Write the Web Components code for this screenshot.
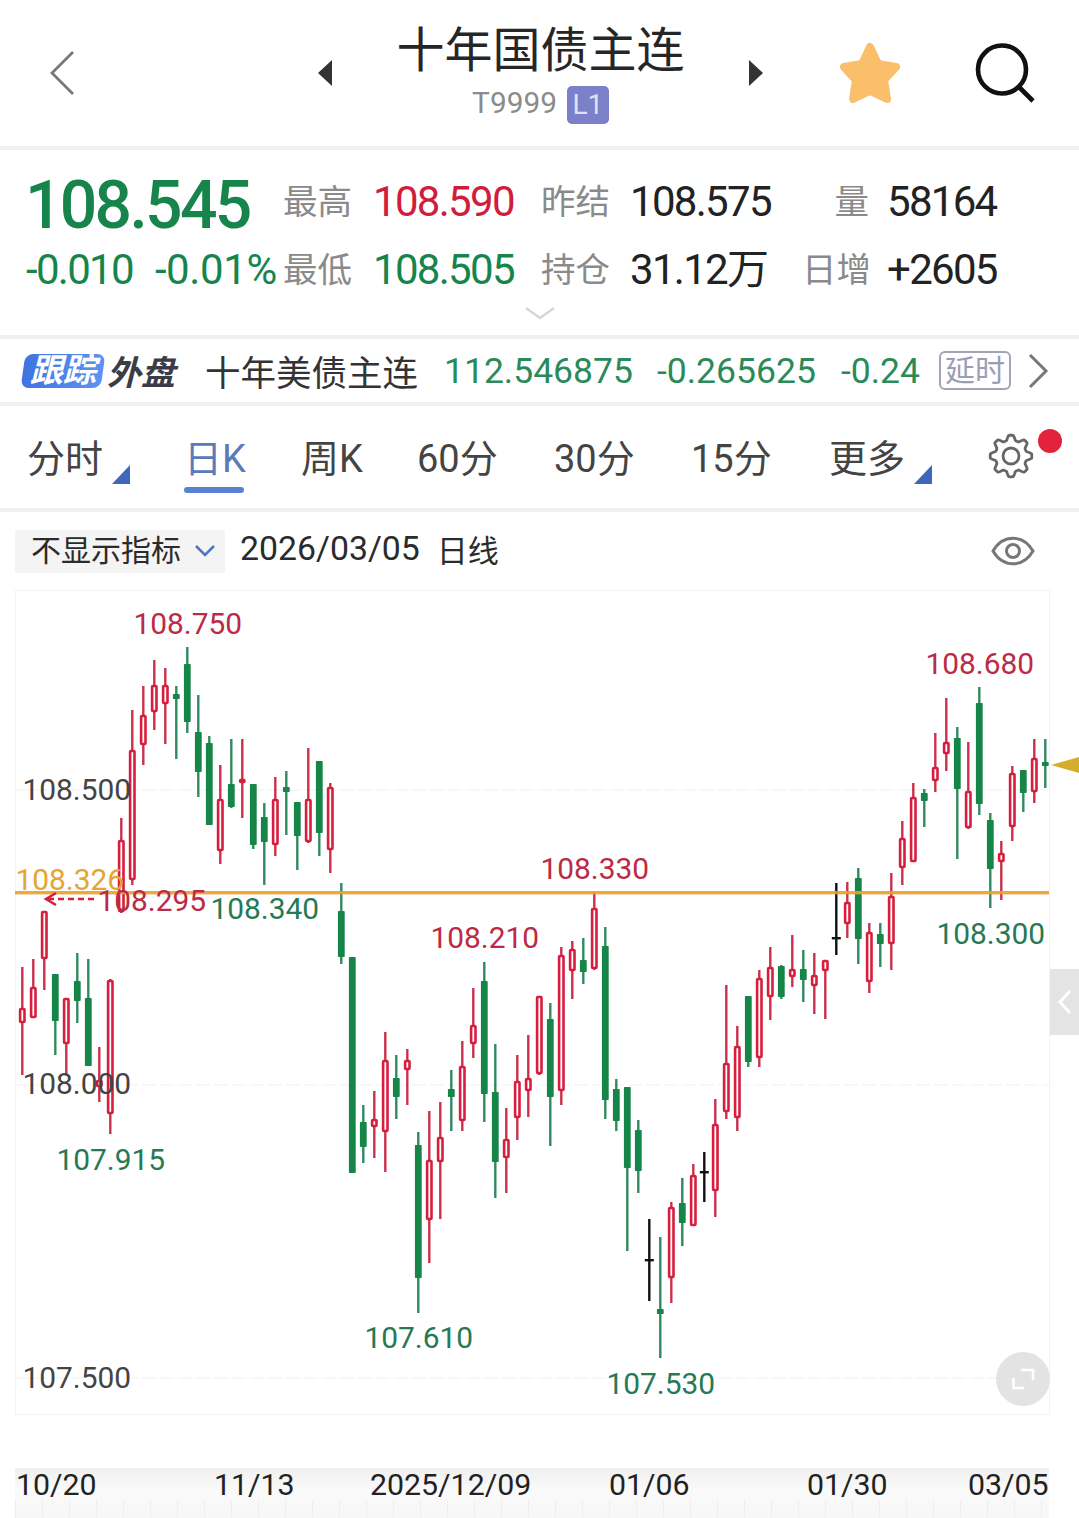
<!DOCTYPE html>
<html lang="zh">
<head>
<meta charset="utf-8">
<title>十年国债主连</title>
<style>
    html, body {
        margin: 0;
        background: #fff;
        width: 1079px;
        height: 1518px;
        overflow: hidden;
        font-family: Roboto, "Noto Sans CJK SC", sans-serif;
        color: #333;
    }
</style>
</head>
<body>

<app-header>
    <span slot="title">十年国债主连</span>
    <span slot="code">T9999</span>
    <span slot="badge">L1</span>
</app-header>

<quote-panel>
    <quote-val size="big" tone="green">108.545</quote-val>
    <quote-val tone="label">最高</quote-val>
    <quote-val tone="red">108.590</quote-val>
    <quote-val tone="label">昨结</quote-val>
    <quote-val>108.575</quote-val>
    <quote-val tone="label" align="right">量</quote-val>
    <quote-val>58164</quote-val>

    <quote-pair>
        <quote-val tone="green">-0.010</quote-val>
        <quote-val tone="green" size="pct">-0.01%</quote-val>
    </quote-pair>
    <quote-val tone="label">最低</quote-val>
    <quote-val tone="green">108.505</quote-val>
    <quote-val tone="label">持仓</quote-val>
    <quote-val>31.12万</quote-val>
    <quote-val tone="label" align="right">日增</quote-val>
    <quote-val>+2605</quote-val>
</quote-panel>

<follow-bar>
    <span slot="tag">跟踪</span>
    <span slot="market">外盘</span>
    <span slot="name">十年美债主连</span>
    <span slot="price">112.546875</span>
    <span slot="change">-0.265625</span>
    <span slot="pct">-0.24</span>
    <span slot="delay">延时</span>
</follow-bar>

<period-tabs>
    <period-tab corner>分时</period-tab>
    <period-tab active>日K</period-tab>
    <period-tab>周K</period-tab>
    <period-tab>60分</period-tab>
    <period-tab>30分</period-tab>
    <period-tab>15分</period-tab>
    <period-tab corner>更多</period-tab>
</period-tabs>

<indicator-bar>
    <span slot="pick">不显示指标</span>
    <span slot="date">2026/03/05</span>
    <span slot="kind">日线</span>
</indicator-bar>

<kline-chart>
    <price-tag x="134" y="624" tone="red">108.750</price-tag>
    <price-tag x="23" y="790">108.500</price-tag>
    <price-tag x="16" y="880" tone="orange">108.326</price-tag>
    <price-tag x="98" y="901" tone="red">108.295</price-tag>
    <price-tag x="211" y="909" tone="green">108.340</price-tag>
    <price-tag x="541" y="869" tone="red">108.330</price-tag>
    <price-tag x="431" y="938" tone="red">108.210</price-tag>
    <price-tag x="937" y="934" tone="green">108.300</price-tag>
    <price-tag x="926" y="664" tone="red">108.680</price-tag>
    <price-tag x="23" y="1084">108.000</price-tag>
    <price-tag x="57" y="1160" tone="green">107.915</price-tag>
    <price-tag x="365" y="1338" tone="green">107.610</price-tag>
    <price-tag x="607" y="1384" tone="green">107.530</price-tag>
    <price-tag x="23" y="1378">107.500</price-tag>
</kline-chart>

<time-axis>
    <span>10/20</span>
    <span>11/13</span>
    <span>2025/12/09</span>
    <span>01/06</span>
    <span>01/30</span>
    <span>03/05</span>
</time-axis>

<script>
function tpl(html) {
    const t = document.createElement('template');
    t.innerHTML = html;
    return t;
}

class ShadowEl extends HTMLElement {
    constructor() {
        super();
        this.attachShadow({ mode: 'open' });
        this.shadowRoot.appendChild(this.constructor.template.content.cloneNode(true));
    }
}

class AppHeader extends ShadowEl {
    static template = tpl(`
<style>
    :host {
        display: flex;
        align-items: flex-start;
        box-sizing: border-box;
        height: 150px;
        border-bottom: 4px solid #f0f0f0;
    }
    .back { margin: 50px 0 0 49px; width: 26px; height: 46px; flex: none; }
    .arrow { margin-top: 60px; width: 16px; height: 26px; flex: none; }
    .arrow.l { margin-left: 242px; }
    .mid {
        width: 415px;
        flex: none;
        display: flex;
        flex-direction: column;
        align-items: center;
    }
    .title {
        font-size: 48px;
        line-height: 56px;
        margin-top: 23px;
        color: #262626;
    }
    .sub {
        display: flex;
        align-items: center;
        gap: 10px;
        margin-top: 6px;
        color: #8b8b8b;
        font-size: 29.8px;
    }
    .code { padding-bottom: 4px; }
    .badge {
        width: 42px;
        height: 38px;
        border-radius: 5px;
        background: #7b80c8;
        color: #dfe1f7;
        font-size: 28px;
        display: flex;
        align-items: center;
        justify-content: center;
    }
    .star { margin: 42px 0 0 75px; width: 62px; height: 62px; flex: none; }
    .search { margin: 42px 0 0 73px; width: 62px; height: 62px; flex: none; }
</style>
<svg class="back" viewBox="0 0 26 46"><path d="M24 2 3 23l21 21" fill="none" stroke="#777" stroke-width="2.8"/></svg>
<svg class="arrow l" viewBox="0 0 16 26"><path d="M15 0v26L1 13z" fill="#333"/></svg>
<div class="mid">
    <div class="title"><slot name="title"></slot></div>
    <div class="sub">
        <div class="code"><slot name="code"></slot></div>
        <div class="badge"><slot name="badge"></slot></div>
    </div>
</div>
<svg class="arrow r" viewBox="0 0 16 26"><path d="M1 0v26l14-13z" fill="#333"/></svg>
<svg class="star" viewBox="0 0 62 62"><path d="M31 5 39 22 57 25 45 38 48 57 31 49 14 57 17 38 5 25 23 22z" fill="#fbbf6b" stroke="#fbbf6b" stroke-width="8" stroke-linejoin="round"/></svg>
<svg class="search" viewBox="0 0 62 62"><circle cx="28" cy="27.5" r="24" fill="none" stroke="#111" stroke-width="4.6"/><path d="M45 45 59 59" stroke="#111" stroke-width="4.6" fill="none"/></svg>
`);
}

class QuotePanel extends ShadowEl {
    static template = tpl(`
<style>
    :host {
        display: block;
        box-sizing: border-box;
        height: 189px;
        border-bottom: 4px solid #f0f0f0;
        padding: 18px 0 0 26px;
    }
    .grid {
        display: grid;
        grid-template-columns: 257px 90px 168px 89px 172px 85px 1fr;
        grid-template-rows: 68px 67px;
        align-items: center;
    }
    svg { display: block; margin: 3px 0 0 498px; width: 32px; height: 14px; }
</style>
<div class="grid"><slot></slot></div>
<svg viewBox="0 0 32 14"><path d="M2 2l14 10L30 2" fill="none" stroke="#d6d6d6" stroke-width="2.4"/></svg>
`);
}

class QuoteVal extends ShadowEl {
    static template = tpl(`
<style>
    :host {
        display: block;
        font-size: 42px;
        line-height: 48px;
        letter-spacing: -1.7px;
        color: #222;
        white-space: nowrap;
    }
    :host([size="big"]) {
        font-size: 66px;
        line-height: 66px;
        font-weight: 500;
        letter-spacing: -2.7px;
        margin: 7px 0 0 -1px;
    }
    :host([size="pct"]) { letter-spacing: -0.4px; }
    :host([tone="green"]) { color: #17854b; }
    :host([tone="red"]) { color: #d11c3c; }
    :host([tone="label"]) { color: #8a8a8a; font-size: 34.5px; letter-spacing: 0; }
    :host([align="right"]) { text-align: right; padding-right: 18px; }
</style>
<slot></slot>
`);
}

class QuotePair extends ShadowEl {
    static template = tpl(`
<style>
    :host { display: flex; gap: 22px; }
</style>
<slot></slot>
`);
}

class FollowBar extends ShadowEl {
    static template = tpl(`
<style>
    :host {
        display: flex;
        align-items: center;
        box-sizing: border-box;
        height: 67px;
        border-bottom: 4px solid #f0f0f0;
        font-size: 35.5px;
    }
    .tag {
        margin-left: 23px;
        width: 80px;
        height: 34px;
        flex: none;
        position: relative;
        isolation: isolate;
        color: #fff;
        font-size: 33px;
        font-weight: 700;
        font-style: italic;
        line-height: 33px;
        text-align: center;
    }
    .tag::before {
        content: "";
        position: absolute;
        inset: 0;
        z-index: -1;
        border-radius: 8px;
        transform: skewX(-8deg);
        background: linear-gradient(90deg, #3f74e0, #5d93f1);
    }
    .market {
        margin-left: 4px;
        width: 72px;
        flex: none;
        color: #3c3c46;
        font-size: 34px;
        font-weight: 700;
        font-style: italic;
    }
    .name { margin-left: 26px; width: 239px; flex: none; color: #333; }
    .num { color: #2a8a5a; flex: none; }
    .price { width: 213px; }
    .change { width: 184px; }
    .pct { width: 98px; }
    .delay {
        box-sizing: border-box;
        width: 72px;
        height: 39px;
        flex: none;
        border: 2px solid #a3a3b5;
        border-radius: 6px;
        color: #9c9cb5;
        font-size: 30px;
        line-height: 35px;
        text-align: center;
    }
    svg { margin-left: 16px; width: 22px; height: 36px; flex: none; }
</style>
<div class="tag"><slot name="tag"></slot></div>
<div class="market"><slot name="market"></slot></div>
<div class="name"><slot name="name"></slot></div>
<div class="num price"><slot name="price"></slot></div>
<div class="num change"><slot name="change"></slot></div>
<div class="num pct"><slot name="pct"></slot></div>
<div class="delay"><slot name="delay"></slot></div>
<svg viewBox="0 0 22 36"><path d="M3 2l16 16L3 34" fill="none" stroke="#777" stroke-width="3"/></svg>
`);
}

class PeriodTabs extends ShadowEl {
    static template = tpl(`
<style>
    :host {
        display: flex;
        align-items: flex-start;
        box-sizing: border-box;
        height: 106px;
        border-bottom: 4px solid #f0f0f0;
        padding-left: 27px;
        position: relative;
    }
    .row {
        display: grid;
        grid-template-columns: 159px 115px 116px 137px 137px 138px 160px;
        margin-top: 28px;
    }
    .gear { position: absolute; left: 987px; top: 26px; width: 48px; height: 48px; }
    .dot {
        position: absolute;
        left: 1038px;
        top: 23px;
        width: 24px;
        height: 24px;
        border-radius: 50%;
        background: #e3223c;
    }
</style>
<div class="row"><slot></slot></div>
<svg class="gear" viewBox="-24 -24 48 48"><path id="cog" fill="none" stroke="#666" stroke-width="2.8" stroke-linejoin="round"/><circle r="8" fill="none" stroke="#666" stroke-width="2.8"/></svg>
<div class="dot"></div>
`);

    connectedCallback() {
        // eight lobed cog outline, sampled round the circle
        let d = '';
        for (let k = 0; k < 120; k++) {
            const a = k / 120 * Math.PI * 2;
            const wave = Math.max(-1, Math.min(1, 1.5 * Math.cos(8 * a)));
            const r = 18.3 + 2.5 * wave;
            d += (k ? 'L' : 'M') + (r * Math.sin(a)).toFixed(2) + ' ' + (-r * Math.cos(a)).toFixed(2);
        }
        this.shadowRoot.getElementById('cog').setAttribute('d', d + 'z');
    }
}

class PeriodTab extends ShadowEl {
    static template = tpl(`
<style>
    :host {
        display: block;
        position: relative;
        font-size: 38px;
        line-height: 50px;
        color: #444;
        white-space: nowrap;
    }
    :host([active]) { color: #5b7ab8; margin-left: -2px; }
    :host([active]) .bar { display: block; }
    :host([corner]) .tri { display: block; }
    .bar {
        display: none;
        position: absolute;
        left: 0;
        top: 53px;
        width: 60px;
        height: 6px;
        border-radius: 3px;
        background: #5a82d2;
    }
    .tri {
        display: none;
        position: absolute;
        left: 85px;
        top: 31px;
        width: 18px;
        height: 19px;
        background: #3f67bd;
        clip-path: polygon(100% 0, 100% 100%, 0 100%);
    }
</style>
<slot></slot>
<div class="bar"></div>
<div class="tri"></div>
`);
}

class IndicatorBar extends ShadowEl {
    static template = tpl(`
<style>
    :host {
        display: flex;
        align-items: center;
        box-sizing: border-box;
        height: 78px;
        padding: 0 44px 0 15px;
    }
    .pick {
        display: flex;
        align-items: center;
        box-sizing: border-box;
        width: 210px;
        height: 43px;
        padding-left: 16px;
        background: #f4f4f4;
        color: #2b2b2b;
        font-size: 30px;
    }
    .pick span { padding-bottom: 6px; }
    .pick svg { margin-left: 13px; width: 22px; height: 14px; }
    .date {
        display: flex;
        gap: 17px;
        align-items: center;
        margin-left: 15px;
        padding-bottom: 6px;
        font-size: 33.8px;
        color: #2b2b2b;
        flex: 1;
        white-space: nowrap;
    }
    .kind { font-size: 31px; }
    .eye { width: 44px; height: 32px; }
</style>
<div class="pick"><span><slot name="pick"></slot></span>
    <svg viewBox="0 0 22 14"><path d="M2 2l9 9 9-9" fill="none" stroke="#4f74c2" stroke-width="2.6"/></svg>
</div>
<div class="date"><slot name="date"></slot><span class="kind"><slot name="kind"></slot></span></div>
<svg class="eye" viewBox="0 0 44 32"><path d="M2 16C12-1 32-1 42 16 32 33 12 33 2 16z" fill="none" stroke="#777" stroke-width="3"/><circle cx="22" cy="16" r="6.5" fill="none" stroke="#777" stroke-width="3"/></svg>
`);
}

// wick top, wick bottom, body top, body bottom, r / g / k
const CANDLES = [
    [967,1075,1008,1023,'r'],[959,1018,987,1018,'r'],[911,990,911,959,'r'],[974,1055,974,1021,'g'],
    [998,1075,998,1044,'r'],[953,1023,981,1001,'g'],[959,1066,998,1066,'g'],[1047,1102,1080,1087,'r'],
    [979,1134,980,1114,'r'],[818,913,840,912,'r'],[710,885,750,880,'r'],[686,765,715,745,'r'],
    [660,730,685,712,'r'],[668,744,685,704,'r'],[686,759,694,699,'g'],[647,733,664,722,'g'],
    [695,797,732,772,'g'],[736,825,743,825,'g'],[765,864,799,851,'r'],[739,808,784,807,'g'],
    [739,818,779,783,'r'],[784,849,784,845,'g'],[803,885,817,842,'g'],[777,856,799,845,'r'],
    [771,835,787,792,'g'],[802,870,802,836,'g'],[748,843,799,842,'r'],[761,856,761,833,'g'],
    [783,873,787,850,'r'],[883,964,911,957,'g'],[957,1173,957,1173,'g'],[1105,1163,1122,1147,'g'],
    [1091,1158,1119,1127,'r'],[1032,1172,1060,1132,'r'],[1055,1119,1078,1097,'g'],[1049,1105,1060,1070,'r'],
    [1132,1313,1145,1278,'g'],[1111,1263,1160,1220,'r'],[1102,1219,1137,1162,'r'],[1070,1131,1089,1097,'g'],
    [1041,1131,1066,1121,'r'],[988,1058,1025,1044,'r'],[962,1122,981,1094,'g'],[1044,1198,1092,1162,'g'],
    [1108,1193,1139,1158,'r'],[1055,1140,1081,1118,'r'],[1035,1117,1078,1091,'r'],[996,1075,996,1074,'r'],
    [1003,1146,1019,1097,'g'],[947,1105,955,1091,'r'],[941,999,949,971,'r'],[938,984,960,972,'g'],
    [892,970,908,969,'r'],[927,1119,946,1100,'g'],[1079,1131,1089,1121,'g'],[1087,1251,1087,1168,'g'],
    [1120,1193,1130,1171,'g'],[1219,1301,1260,1260,'k'],[1237,1358,1309,1314,'g'],[1202,1303,1207,1278,'r'],
    [1178,1246,1203,1223,'g'],[1164,1226,1175,1226,'r'],[1152,1202,1172,1172,'k'],[1099,1217,1124,1191,'r'],
    [985,1119,1063,1112,'r'],[1026,1131,1046,1118,'r'],[996,1067,996,1062,'g'],[970,1067,978,1058,'r'],
    [947,1020,967,997,'r'],[965,999,966,997,'g'],[935,987,969,977,'r'],[950,1002,969,980,'g'],
    [953,1014,975,986,'r'],[960,1019,960,971,'r'],[883,955,938,938,'k'],[882,938,902,924,'r'],
    [868,964,878,939,'g'],[923,993,932,982,'r'],[923,967,934,944,'g'],[873,970,896,944,'r'],
    [821,885,838,868,'r'],[783,862,797,862,'r'],[789,827,793,801,'g'],[733,792,767,781,'r'],
    [698,771,742,754,'r'],[727,859,738,789,'g'],[742,829,791,828,'r'],[687,815,703,804,'g'],
    [813,908,820,869,'g'],[841,900,853,862,'r'],[766,841,773,827,'r'],[770,812,770,793,'g'],
    [739,803,758,792,'r'],[739,788,762,766,'g']
];

class KlineChart extends ShadowEl {
    static template = tpl(`
<style>
    :host {
        display: block;
        position: relative;
        height: 878px;
    }
    .frame {
        box-sizing: border-box;
        margin: 0 29px 0 15px;
        height: 825px;
        border: 1px solid #f3f3f3;
    }
    svg { position: absolute; left: 0; top: 0; width: 1079px; height: 878px; }
</style>
<div class="frame"></div>
<svg viewBox="0 590 1079 878"></svg>
<slot></slot>
`);

    connectedCallback() {
        const W = { r: '#c9304b', g: '#2f8a5f', k: '#111' };
        let out = '';
        [790, 1085, 1378].forEach(y => {
            out += `<line x1="16" x2="1049" y1="${y}" y2="${y}" stroke="#f6f6f6" stroke-width="1.5" stroke-dasharray="14 4"/>`;
        });
        CANDLES.forEach(([wt, wb, bt, bb, c], i) => {
            const x = +(22.3 + i * 11).toFixed(1);
            out += `<line x1="${x}" x2="${x}" y1="${wt}" y2="${wb}" stroke="${W[c]}" stroke-width="2.4"/>`;
            if (c === 'k') {
                out += `<rect x="${x - 4.5}" y="${bt - 1}" width="9" height="2.4" fill="#111"/>`;
            } else if (c === 'g') {
                out += `<rect x="${x - 3.4}" y="${bt}" width="6.8" height="${Math.max(bb - bt, 4)}" rx="0.8" fill="#168548"/>`;
            } else {
                out += `<rect x="${x - 2.2}" y="${bt + 1}" width="4.4" height="${Math.max(bb - bt - 2, 2)}" rx="0.8" fill="#fff" stroke="#d81e3e" stroke-width="2.6"/>`;
            }
        });
        out += `<rect x="15" y="891" width="1034" height="3.4" fill="#ea9f2c" opacity="0.9"/>`;
        out += `<path d="M56 893 46 899l10 6" fill="none" stroke="#d81e3e" stroke-width="2.6"/>`;
        out += `<line x1="48" x2="97" y1="899" y2="899" stroke="#d81e3e" stroke-width="2.4" stroke-dasharray="6 4"/>`;
        out += `<path d="M1051 765 1079 757v16z" fill="#d4ae2a"/>`;
        out += `<rect x="1050" y="969" width="29" height="66" fill="#e4e4e4"/>`;
        out += `<path d="M1070 991l-10 11 10 11" fill="none" stroke="#fff" stroke-width="3"/>`;
        out += `<circle cx="1023" cy="1379" r="27" fill="#e3e3e3"/>`;
        out += `<path d="M1021 1370h12v10M1013.500 1378v10h10.500" fill="none" stroke="#fff" stroke-width="2.6"/>`;
        this.shadowRoot.querySelector('svg').innerHTML = out;
    }
}

class PriceTag extends ShadowEl {
    static template = tpl(`
<style>
    :host {
        position: absolute;
        font-size: 29.9px;
        line-height: 34px;
        color: #444;
        white-space: nowrap;
    }
    :host([tone="red"]) { color: #bb2a46; }
    :host([tone="green"]) { color: #267a53; }
    :host([tone="orange"]) { color: #e4a531; }
</style>
<slot></slot>
`);

    connectedCallback() {
        // the attributes are page coordinates, y is the text centre
        this.style.left = (this.getAttribute('x') - 0.6) + 'px';
        this.style.top = (this.getAttribute('y') - 590 - 17) + 'px';
    }
}

class TimeAxis extends ShadowEl {
    static template = tpl(`
<style>
    :host {
        display: grid;
        grid-template-columns: 198px 156px 239px 198px 161px 80px;
        box-sizing: border-box;
        margin: 0 30px 0 15px;
        height: 50px;
        padding-left: 1px;
        font-size: 30.3px;
        line-height: 34px;
        color: #222;
        background:
            repeating-linear-gradient(90deg, #efefef 0 1px, transparent 1px 27px) 0 32px / 100% 18px no-repeat,
            linear-gradient(#f0f0f0, #fafafa 45%, #f7f7f7);
        white-space: nowrap;
        overflow: hidden;
    }
</style>
<slot></slot>
`);
}

customElements.define('app-header', AppHeader);
customElements.define('quote-panel', QuotePanel);
customElements.define('quote-val', QuoteVal);
customElements.define('quote-pair', QuotePair);
customElements.define('follow-bar', FollowBar);
customElements.define('period-tabs', PeriodTabs);
customElements.define('period-tab', PeriodTab);
customElements.define('indicator-bar', IndicatorBar);
customElements.define('kline-chart', KlineChart);
customElements.define('price-tag', PriceTag);
customElements.define('time-axis', TimeAxis);
</script>
</body>
</html>
